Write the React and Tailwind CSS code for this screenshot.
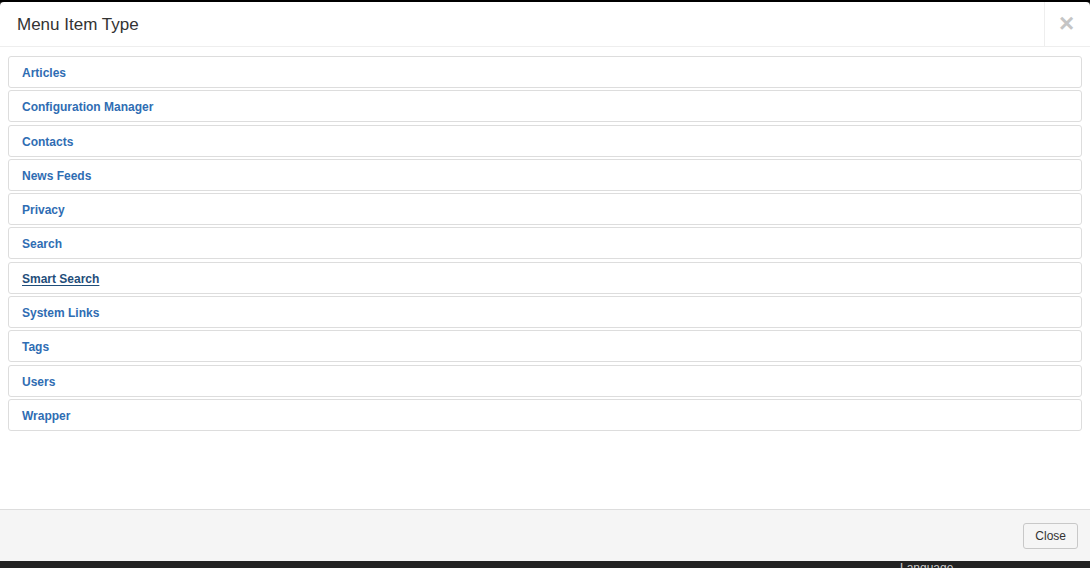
import React from 'react';

const items = [
    'Articles',
    'Configuration Manager',
    'Contacts',
    'News Feeds',
    'Privacy',
    'Search',
    'Smart Search',
    'System Links',
    'Tags',
    'Users',
    'Wrapper',
];

const App = () => {
    return (
        <div className="w-[1090px] h-[568px] bg-[#222] overflow-hidden flex flex-col" style={{ fontFamily: '"Liberation Sans", Arial, sans-serif' }}>
            <div className="h-[2px] bg-black shrink-0" />
            {/* modal */}
            <div className="h-[559px] bg-white rounded-t-[4px] flex flex-col shrink-0">
                <div className="h-[45px] border-b border-[#eee] flex items-stretch shrink-0">
                    <h3 className="flex-1 pl-[17px] pt-[13px] text-[17px] text-[#333] leading-[20px]">Menu Item Type</h3>
                    <div className="w-[46px] border-l border-[#eee] flex items-center justify-center pr-[2px]">
                        <span className="text-[26px] font-bold text-[#c5c5c5] leading-none -mt-[2px]">×</span>
                    </div>
                </div>
                <div className="flex-1 px-[8px] pt-[9px] flex flex-col gap-[2.3px]">
                    {items.map((item) => (
                        <div key={item} className="h-[32px] border border-[#ddd] rounded-[3px] flex items-center pl-[13px] pt-[2px]">
                            <a
                                href="#"
                                className={`text-[12px] font-bold leading-none ${item === 'Smart Search' ? 'text-[#1f4e7a] underline underline-offset-2' : 'text-[#2f6db3]'}`}
                            >
                                {item}
                            </a>
                        </div>
                    ))}
                </div>
                <div className="h-[52px] bg-[#f5f5f5] border-t border-[#ddd] flex items-center justify-end pr-[12px] shrink-0">
                    <button className="h-[26px] px-[11px] bg-[#f5f5f5] border border-[#c8c8c8] rounded-[3px] text-[12px] text-[#333]">Close</button>
                </div>
            </div>
            <div className="relative flex-1">
                <span className="absolute left-[900px] top-[-2px] text-[12px] text-[#ccc]">Language</span>
            </div>
        </div>
    );
};

export default App;
